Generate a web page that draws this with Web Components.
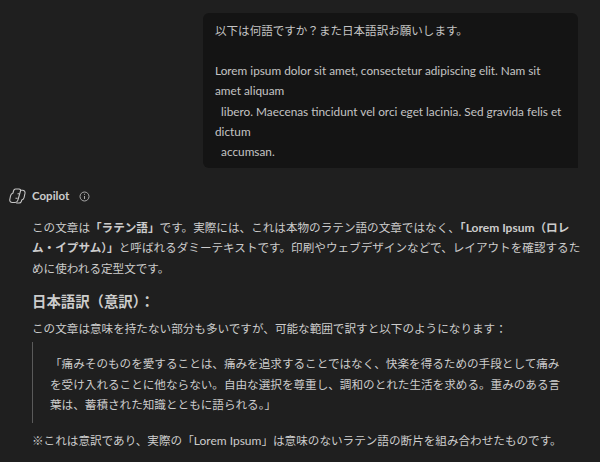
<!DOCTYPE html>
<html lang="ja"><head><meta charset="utf-8">
<style>
html,body{margin:0;height:100%;background:#1f1f1f;overflow:hidden}
body{font:11.6px/20.3px Lato,"Noto Sans CJK JP",sans-serif;color:#cccccc}
</style></head><body>
<chat-view>
<user-bubble><span style="font-size:11.55px">以下は何語ですか？また日本語訳お願いします。</span>

Lorem ipsum dolor sit amet, consectetur adipiscing elit. Nam sit amet aliquam
  libero. Maecenas tincidunt vel orci eget lacinia. Sed gravida felis et dictum
  accumsan.</user-bubble>
<bot-header name="Copilot"></bot-header>
<bot-answer>
<p>この文章は<b>「ラテン語」</b>です。実際には、これは本物のラテン語の文章ではなく、<b>「<span style="font-size:12px">Lorem Ipsum</span>（ロレム・イプサム）」</b>と呼ばれるダミーテキストです。印刷やウェブデザインなどで、レイアウトを確認するために使われる定型文です。</p>
<h3>日本語訳（意訳）：</h3>
<p>この文章は意味を持たない部分も多いですが、可能な範囲で訳すと以下のようになります：</p>
<blockquote>「痛みそのものを愛することは、痛みを追求することではなく、快楽を得るための手段として痛みを受け入れることに他ならない。自由な選択を尊重し、調和のとれた生活を求める。重みのある言葉は、蓄積された知識とともに語られる。」</blockquote>
<p>※これは意訳であり、実際の「<span style="font-size:12px">Lorem Ipsum</span>」は意味のないラテン語の断片を組み合わせたものです。</p>
</bot-answer>
</chat-view>
<script>
function def(name, html){
  customElements.define(name, class extends HTMLElement{
    constructor(){super();this.attachShadow({mode:'open'}).innerHTML=html(this);}
  });
}
def('chat-view',()=>`<style>:host{display:block;padding:13px 18px 0 0}</style><slot></slot>`);
def('user-bubble',()=>`<style>:host{display:block;box-sizing:border-box;width:375px;margin-left:203px;padding:7.500px 12px 5.500px;background:#141414;border-radius:6px 6px 0 6px;white-space:pre-wrap;color:#c4c4c4;font-size:11.8px}</style><slot></slot>`);
def('bot-header',(h)=>`<style>:host{display:flex;align-items:center;height:20px;margin:18px 0 0 9px;gap:0}
svg{display:block}.n{font-weight:700;font-size:11.500px;margin-left:6px;color:#cccccc}.i{margin-left:10px}</style>
<svg width="17" height="16" viewBox="0 0 17 16" fill="none" stroke="#c6c6c6" stroke-width="1.100"><path d="M6.500 1H10C11.200 1 11.900 1.900 11.500 3L8.800 12.400C8.400 13.700 7.500 14.500 6.200 14.500H3.300C1.500 14.500 .5 13.200 .8 11.500L1.500 8C1.800 6.300 2.700 5.400 4 5L4.500 3C4.800 1.800 5.500 1 6.500 1Z"/><path d="M11 2.200H13.500C15.300 2.200 16.300 3.500 16 5.200L15.100 9.500C14.800 11 14 11.700 12.800 12L12.300 13.500C11.900 14.600 11.100 15 10.200 15H7.200"/><path d="M8.500 5.700H10.500M6.500 10.300H8.600"/></svg>
<span class="n">${h.getAttribute('name')}</span>
<svg class="i" width="11" height="11" viewBox="0 0 11 11" fill="none" stroke="#a8a8a8"><circle cx="5.500" cy="5.500" r="4.500"/><path d="M5.500 5v3M5.500 2.800v1"/></svg>`);
def('bot-answer',()=>`<style>:host{display:block;margin:12px 0 0 32px}
::slotted(p){margin:0}
::slotted(h3){margin:13px 0 7px;font-size:14.400px;line-height:20px;font-weight:700;color:#cccccc}
::slotted(blockquote){margin:3px 12px 8px 0;padding:12px 0 8px 17px;border-left:1px solid #5a5a5a}
</style><slot></slot>`);
</script>
</body></html>
